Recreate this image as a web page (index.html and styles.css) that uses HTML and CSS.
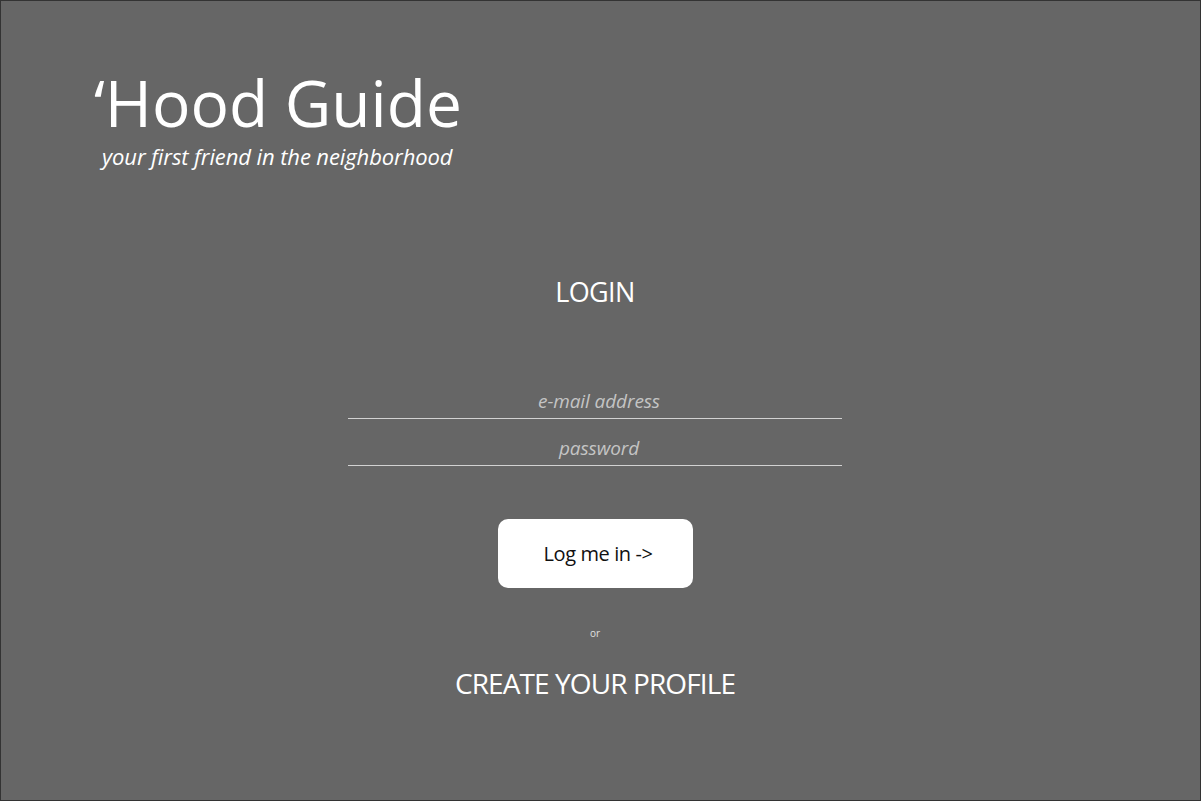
FILE: index.html
```html
<!DOCTYPE html>
<html lang="en">
<head>
<meta charset="utf-8">
<title>'Hood Guide</title>
<link rel="stylesheet" href="styles.css">
</head>
<body>
<div class="page">
  <header class="brand">
    <h1 class="brand-title">&lsquo;Hood Guide</h1>
    <p class="brand-tagline">your first friend in the neighborhood</p>
  </header>
  <main class="login">
    <h2 class="login-title">LOGIN</h2>
    <form class="login-form">
      <input class="field" type="email" placeholder="e-mail address">
      <input class="field" type="password" placeholder="password">
      <button class="btn" type="button">Log me in -&gt;</button>
    </form>
    <p class="or">or</p>
    <a class="create" href="#">CREATE YOUR PROFILE</a>
  </main>
</div>
</body>
</html>
```
FILE: styles.css
```css
html, body {
  margin: 0;
  padding: 0;
  background: #666666;
}
.page {
  box-sizing: border-box;
  width: 1201px;
  height: 801px;
  border: 1px solid #333333;
  background: #666666;
  font-family: "Open Sans", "Liberation Sans", sans-serif;
  color: #ffffff;
  display: flex;
  flex-direction: column;
}
.brand {
  padding: 70px 0 0 93px;
}
.brand-title {
  margin: 0;
  font-size: 64px;
  font-weight: 400;
  line-height: 64px;
  letter-spacing: 0;
}
.brand-tagline {
  margin: 7px 0 0 8px;
  font-size: 22px;
  font-style: italic;
  line-height: 28px;
  letter-spacing: -0.1px;
}
.login {
  display: flex;
  flex-direction: column;
  align-items: center;
  margin-top: 105px;
  padding-right: 11px;
}
.login-title {
  margin: 0;
  font-size: 27px;
  font-weight: 400;
  line-height: 34px;
  letter-spacing: -0.6px;
}
.login-form {
  display: flex;
  flex-direction: column;
  align-items: center;
  margin-top: 63px;
}
.field {
  box-sizing: border-box;
  width: 494px;
  height: 47px;
  padding: 12px 0 0 8px;
  border: 0;
  border-bottom: 1.5px solid #d2d2d2;
  background: transparent;
  font-family: "Open Sans", "Liberation Sans", sans-serif;
  font-size: 19px;
  font-style: italic;
  text-align: center;
  color: #ffffff;
  outline: none;
  letter-spacing: -0.1px;
}
.field::placeholder {
  color: #c4c4c4;
}
.btn {
  margin-top: 53px;
  width: 195px;
  height: 69px;
  padding: 0 0 0 6px;
  border: 0;
  border-radius: 10px;
  background: #ffffff;
  color: #111111;
  font-family: "Open Sans", "Liberation Sans", sans-serif;
  font-size: 20px;
  letter-spacing: -0.4px;
}
.or {
  margin: 38px 0 0;
  font-size: 10px;
  line-height: 14px;
  color: #e0e0e0;
}
.create {
  margin-top: 26px;
  font-size: 28px;
  line-height: 34px;
  color: #ffffff;
  text-decoration: none;
  letter-spacing: -0.9px;
}
```
